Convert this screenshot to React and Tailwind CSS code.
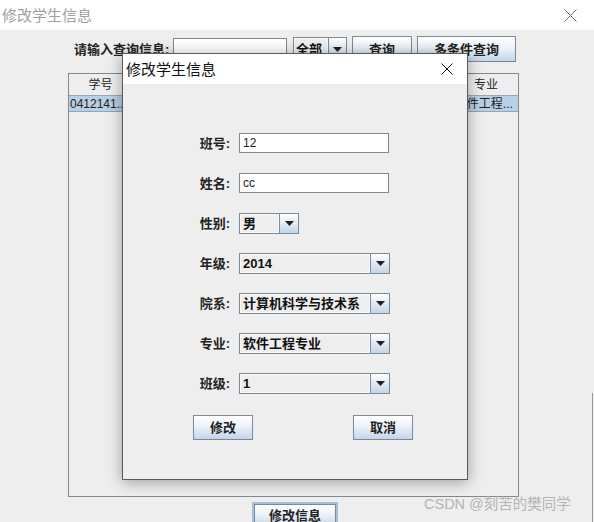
import React from "react";

const FONT = { fontFamily: '"Liberation Sans", "Noto Sans CJK SC", sans-serif' };

function Arrow() {
  return (
    <svg width="9" height="5" viewBox="0 0 9 5">
      <polygon points="0,0 9,0 4.5,5" fill="#222" />
    </svg>
  );
}

function Btn({ children, className = "" }) {
  return (
    <div
      className={`flex items-center justify-center border border-[#7a8a99] bg-gradient-to-b from-white via-[#e9f0f8] to-[#c3d5e9] text-[13px] font-bold text-[#222] leading-none ${className}`}
    >
      {children}
    </div>
  );
}

function Combo({ value, w = "w-[151px]", arrowW = "w-[19px]" }) {
  return (
    <div className={`flex h-[21px] ${w} border border-[#7a8a99] bg-[#eeeeee]`}>
      <div className="flex-1 flex items-center border border-[#fafafa] pl-[2px] text-[13px] font-bold text-[#111] leading-none overflow-hidden whitespace-nowrap">
        {value}
      </div>
      <div className={`flex items-center justify-center ${arrowW} border-l border-[#7a8a99] bg-gradient-to-b from-white to-[#c3d5e9]`}>
        <Arrow />
      </div>
    </div>
  );
}

function TextField({ value }) {
  return (
    <div className="flex items-center h-[20px] w-[150px] border border-[#7a8a99] bg-white pl-[3px] text-[12px] text-[#222] leading-none">
      {value}
    </div>
  );
}

function Row({ label, children }) {
  return (
    <div className="flex items-center h-[40px]">
      <div className="w-[107px] text-right text-[13px] font-bold text-[#222] leading-none whitespace-nowrap">
        {label}
      </div>
      <div className="ml-[9px]">{children}</div>
    </div>
  );
}

export default function App() {
  const headers = ["学号", "姓名", "性别", "年级", "院系", "班级", "专业"];
  const row = ["0412141...", "cc", "男", "2014", "计算机...", "1", "软件工程..."];
  return (
    <div className="relative w-[594px] h-[522px] overflow-hidden bg-[#eeeeee]" style={FONT}>
      {/* Outer title bar */}
      <div className="flex items-center justify-between h-[30px] bg-white pr-[17px]">
        <span className="pl-[2px] text-[15px] text-[#a0a0a0] leading-none">修改学生信息</span>
        <svg width="13" height="13" viewBox="0 0 13 13">
          <path d="M0.5 0.5 L12.5 12.5 M12.5 0.5 L0.5 12.5" stroke="#707070" strokeWidth="1" />
        </svg>
      </div>

      {/* Search row */}
      <div className="flex items-center h-[26px] mt-[6px] pl-[74px]">
        <div className="w-[96px] text-[13px] font-bold text-[#222] leading-none whitespace-nowrap">
          请输入查询信息:
        </div>
        <div className="ml-[3px] h-[22px] w-[114px] border border-[#7a8a99] bg-white" />
        <div className="ml-[6px] flex h-[25px] w-[54px] border border-[#7a8a99] bg-[#eeeeee]">
          <div className="flex-1 flex items-center border border-[#fafafa] pl-[1px] text-[13px] font-bold text-[#111] leading-none">
            全部
          </div>
          <div className="flex items-center justify-center w-[18px] border-l border-[#7a8a99] bg-gradient-to-b from-white to-[#c3d5e9]">
            <Arrow />
          </div>
        </div>
        <Btn className="ml-[5px] w-[60px] h-[26px]">查询</Btn>
        <Btn className="ml-[5px] w-[99px] h-[26px]">多条件查询</Btn>
      </div>

      {/* Table */}
      <div className="ml-[68px] mt-[11px] w-[451px] h-[424px] border border-[#7a8a99] bg-[#eeeeee]">
        <div className="grid grid-cols-7 h-[22px] border-b border-[#9aa6b2]">
          {headers.map((h, i) => (
            <div
              key={h}
              className={`flex items-center justify-center text-[12px] text-[#222] leading-none ${i < 6 ? "border-r border-[#b8c0c8]" : ""}`}
            >
              {h}
            </div>
          ))}
        </div>
        <div className="grid grid-cols-7 h-[16px] bg-[#b8cfe5] border-b border-[#8ea6bf]">
          {row.map((c, i) => (
            <div key={i} className="flex items-center pl-[1px] text-[12px] text-[#222] leading-none whitespace-nowrap overflow-hidden">
              {c}
            </div>
          ))}
        </div>
      </div>

      {/* Bottom button */}
      <div className="ml-[252px] mt-[5px] w-[86px] h-[27px] border-2 border-[#a6bfd8]">
        <div className="flex items-center justify-center w-full h-full border border-[#7a8a99] bg-gradient-to-b from-white via-[#e9f0f8] to-[#c3d5e9] text-[13px] font-bold text-[#222] leading-none">
          修改信息
        </div>
      </div>

      {/* Watermark */}
      <div className="absolute left-[424px] top-[497px] text-[14.5px] text-[#b4b4b4] leading-none whitespace-nowrap">
        CSDN @刻苦的樊同学
      </div>

      {/* stray right border line */}
      <div className="absolute left-[592px] top-[393px] w-px h-[129px] bg-[#9a9a9a]" />

      {/* Dialog */}
      <div className="absolute left-[122px] top-[53px] w-[346px] h-[427px] border border-[#5a5a5a] bg-[#eeeeee] shadow-[0_2px_14px_rgba(0,0,0,0.35)]">
        <div className="flex items-center justify-between h-[30px] bg-white pl-[3px] pr-[14px]">
          <span className="text-[15px] text-[#111] leading-none">修改学生信息</span>
          <svg width="12" height="12" viewBox="0 0 12 12">
            <path d="M0.5 0.5 L11.5 11.5 M11.5 0.5 L0.5 11.5" stroke="#111" strokeWidth="1" />
          </svg>
        </div>
        <div className="pt-[39px]">
          <Row label="班号:"><TextField value="12" /></Row>
          <Row label="姓名:"><TextField value="cc" /></Row>
          <Row label="性别:"><Combo value="男" w="w-[60px]" arrowW="w-[19px]" /></Row>
          <Row label="年级:"><Combo value="2014" /></Row>
          <Row label="院系:"><Combo value="计算机科学与技术系" /></Row>
          <Row label="专业:"><Combo value="软件工程专业" /></Row>
          <Row label="班级:"><Combo value="1" /></Row>
          <div className="flex mt-[12px] pl-[70px]">
            <Btn className="w-[60px] h-[25px]">修改</Btn>
            <Btn className="ml-[100px] w-[60px] h-[25px]">取消</Btn>
          </div>
        </div>
      </div>
    </div>
  );
}
